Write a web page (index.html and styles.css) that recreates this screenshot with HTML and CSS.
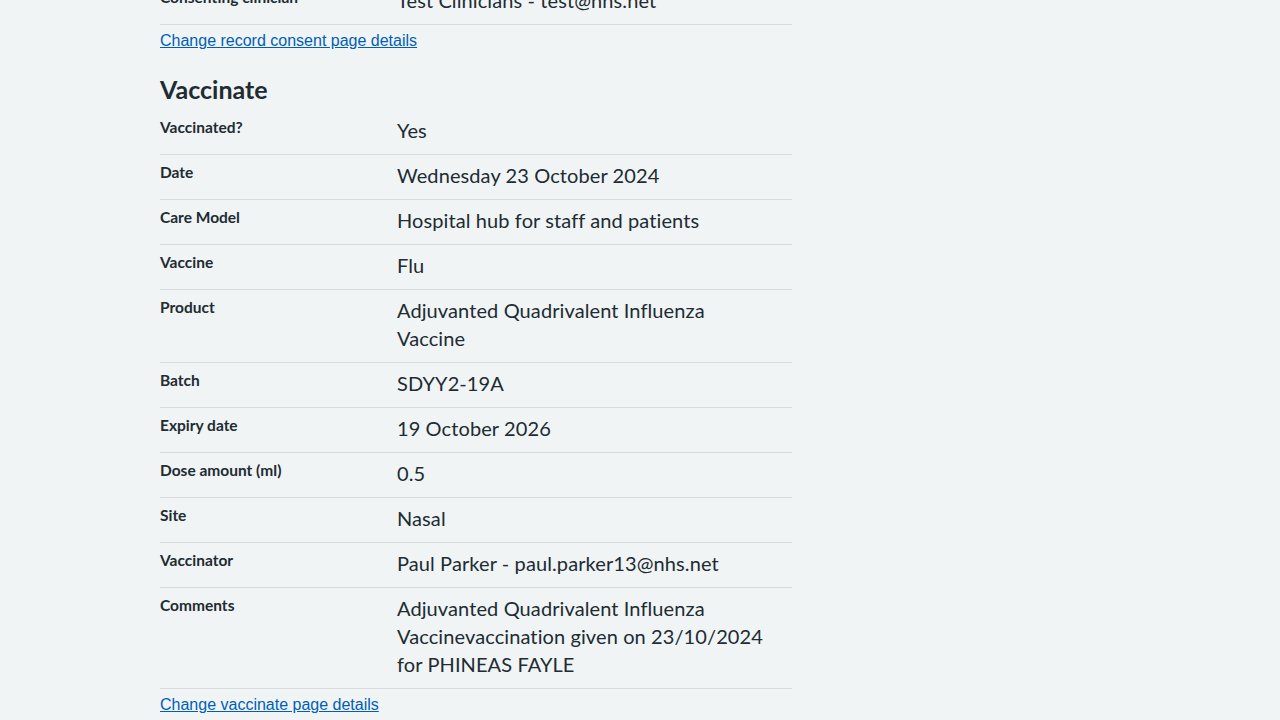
FILE: index.html
```html
<!DOCTYPE html>
<html lang="en">
<head>
<meta charset="utf-8">
<title>Check and confirm</title>
<link rel="stylesheet" href="styles.css">
</head>
<body>
<main class="page">
  <dl class="summary summary--scrolled">
    <div class="row">
      <dt class="key">Consenting clinician</dt>
      <dd class="value">Test Clinicians - test@nhs.net</dd>
    </div>
  </dl>
  <a class="change-link" href="#">Change record consent page details</a>

  <h2 class="section-title">Vaccinate</h2>
  <dl class="summary">
    <div class="row"><dt class="key">Vaccinated?</dt><dd class="value">Yes</dd></div>
    <div class="row"><dt class="key">Date</dt><dd class="value">Wednesday 23 October 2024</dd></div>
    <div class="row"><dt class="key">Care Model</dt><dd class="value">Hospital hub for staff and patients</dd></div>
    <div class="row"><dt class="key">Vaccine</dt><dd class="value">Flu</dd></div>
    <div class="row"><dt class="key">Product</dt><dd class="value">Adjuvanted Quadrivalent Influenza Vaccine</dd></div>
    <div class="row"><dt class="key">Batch</dt><dd class="value">SDYY2-19A</dd></div>
    <div class="row"><dt class="key">Expiry date</dt><dd class="value">19 October 2026</dd></div>
    <div class="row"><dt class="key">Dose amount (ml)</dt><dd class="value">0.5</dd></div>
    <div class="row"><dt class="key">Site</dt><dd class="value">Nasal</dd></div>
    <div class="row"><dt class="key">Vaccinator</dt><dd class="value">Paul Parker - paul.parker13@nhs.net</dd></div>
    <div class="row"><dt class="key">Comments</dt><dd class="value">Adjuvanted Quadrivalent Influenza Vaccinevaccination given on 23/10/2024 for PHINEAS FAYLE</dd></div>
  </dl>
  <a class="change-link" href="#">Change vaccinate page details</a>
</main>
</body>
</html>
```

FILE: styles.css
```css
html, body {
  margin: 0;
  padding: 0;
  background: #f0f4f5;
  color: #212b32;
  font-family: "Lato", "Noto Sans", sans-serif;
}

.page {
  width: 632px;
  margin: 0 0 0 160px;
  display: flex;
  flex-direction: column;
  align-items: flex-start;
}

.summary {
  margin: 0;
  padding: 0;
  width: 100%;
}

.summary--scrolled {
  margin-top: -20px;
}

.row {
  display: grid;
  grid-template-columns: 237px 1fr;
  border-bottom: 1px solid #d8dde0;
  padding: 8px 0;
}

.key {
  margin: -1px 0 0;
  font-weight: 700;
  font-size: 15.5px;
  line-height: 20px;
}

.value {
  margin: -2px 0 2px;
  padding-right: 15px;
  font-size: 20px;
  letter-spacing: 0.1px;
  line-height: 28px;
}

.change-link {
  margin-top: 4px;
  font-family: "Liberation Sans", Arial, sans-serif;
  font-size: 16px;
  line-height: 24px;
  color: #005eb8;
  text-decoration: underline;
}

.section-title {
  margin: 20px 0 5px;
  font-size: 25px;
  line-height: 32px;
  font-weight: 700;
}
```
